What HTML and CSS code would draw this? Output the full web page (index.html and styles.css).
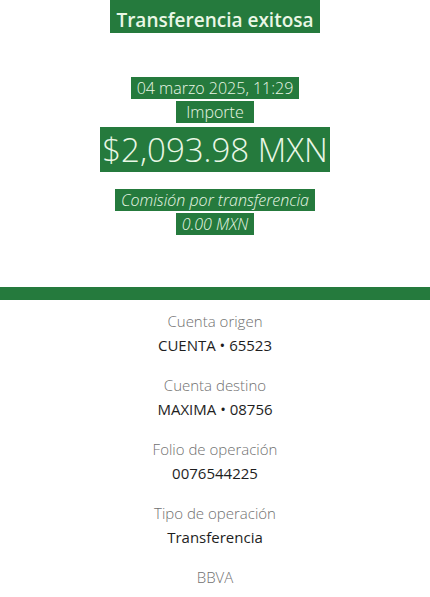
FILE: index.html
```html
<!DOCTYPE html>
<html lang="es">
<head>
    <meta charset="UTF-8">
    <meta name="viewport" content="width=device-width, initial-scale=1.0">
    <title>Transferencia exitosa</title>
    <link rel="stylesheet" href="styles.css">
</head>
<body>
    <div class="summary">
        <h1 class="title"><span class="hl">Transferencia exitosa</span></h1>

        <div class="date"><span class="hl">04 marzo 2025, 11:29</span></div>
        <div class="label"><span class="hl">Importe</span></div>
        <div class="amount"><span class="hl">$2,093.98 MXN</span></div>

        <div class="fee"><span class="hl">Comisión por transferencia</span></div>
        <div class="fee"><span class="hl">0.00 MXN</span></div>
    </div>

    <div class="bar"></div>

    <div class="details">
        <div class="item">
            <div class="item-label">Cuenta origen</div>
            <div class="item-value">CUENTA • 65523</div>
        </div>
        <div class="item">
            <div class="item-label">Cuenta destino</div>
            <div class="item-value">MAXIMA • 08756</div>
        </div>
        <div class="item">
            <div class="item-label">Folio de operación</div>
            <div class="item-value">0076544225</div>
        </div>
        <div class="item">
            <div class="item-label">Tipo de operación</div>
            <div class="item-value">Transferencia</div>
        </div>
        <div class="item">
            <div class="item-label">BBVA</div>
        </div>
    </div>
</body>
</html>
```

FILE: styles.css
```css
body {
    margin: 0;
    background-color: white;
    font-family: "Open Sans", "Liberation Sans", sans-serif;
    text-align: center;
}
.hl {
    background-color: #257a3d;
    color: #eaf7e6;
    padding: 0 6px;
}
.summary {
    padding-bottom: 51px;
}
.title {
    display: flex;
    justify-content: center;
    margin: 0;
    font-size: 19px;
    font-weight: 600;
}
.title .hl {
    display: block;
    padding: 7px 6px 0;
    line-height: 26px;
}
.date {
    margin-top: 43px;
    font-size: 16px;
    font-weight: 300;
    line-height: 24px;
}
.label {
    font-size: 16px;
    font-weight: 300;
    line-height: 24px;
}
.label .hl {
    padding: 0 10px;
}
.amount {
    font-size: 33px;
    font-weight: 300;
    line-height: 52px;
}
.amount .hl {
    padding: 0 2px;
}
.fee {
    font-size: 16px;
    font-weight: 300;
    font-style: italic;
    line-height: 24px;
}
.amount + .fee {
    margin-top: 12px;
}
.bar {
    height: 13px;
    background-color: #257a3d;
}
.details {
    padding-top: 9px;
}
.item {
    margin-bottom: 16px;
}
.item-label {
    font-size: 15px;
    font-weight: 300;
    color: #707070;
    line-height: 24px;
}
.item-value {
    font-size: 15px;
    color: #1e1e1e;
    line-height: 24px;
}
```
